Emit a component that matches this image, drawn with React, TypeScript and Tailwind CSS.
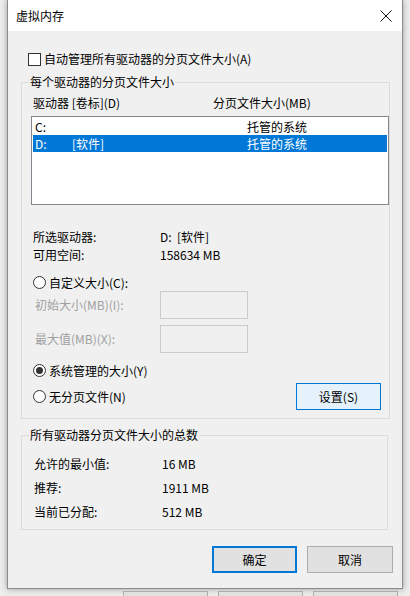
const font = "font-['Noto_Sans_CJK_SC',sans-serif]";

const drives = [
  { letter: "C:", label: "", size: "托管的系统", selected: false },
  { letter: "D:", label: "[软件]", size: "托管的系统", selected: true },
];

const totals = [
  { label: "允许的最小值:", value: "16 MB" },
  { label: "推荐:", value: "1911 MB" },
  { label: "当前已分配:", value: "512 MB" },
];

function Radio({ checked }: { checked?: boolean }) {
  return (
    <span className="w-[13px] h-[13px] rounded-full border border-[#333333] bg-white flex items-center justify-center shrink-0">
      {checked && <span className="w-[7px] h-[7px] rounded-full bg-[#333333]" />}
    </span>
  );
}

export default function App() {
  return (
    <div className={`w-[410px] h-[596px] bg-[#ededed] overflow-hidden text-[12px] leading-[16px] text-black ${font}`}>
      {/* ── Dialog ── */}
      <div className="ml-[7px] w-[396px] h-[589px] flex flex-col border border-t-0 border-[#8c8c8c] bg-[#f0f0f0] shadow-[0_0_6px_rgba(0,0,0,0.35)]">
        {/* Title bar */}
        <div className="h-[31px] bg-white flex items-center pl-[8px] pr-[10px]">
          <span className="text-[12px]">虚拟内存</span>
          <svg className="ml-auto" width="12" height="12" viewBox="0 0 12 12">
            <path d="M0.5 0.5 L11.5 11.5 M11.5 0.5 L0.5 11.5" stroke="#111" strokeWidth="1" />
          </svg>
        </div>

        <div className="pl-[13px] pr-[14px] flex flex-col">
          {/* Auto manage checkbox */}
          <div className="mt-[20px] h-[16px] pl-[7px] flex items-center gap-[3px]">
            <span className="w-[13px] h-[13px] border border-[#333333] bg-white shrink-0" />
            <span>自动管理所有驱动器的分页文件大小(A)</span>
          </div>

          {/* Per-drive group */}
          <fieldset className="mt-[7px] border border-[#dcdcdc] pb-[8px]">
            <legend className="ml-[7px] px-[1px] leading-[16px]">每个驱动器的分页文件大小</legend>

            <div className="mt-[5px] h-[16px] pl-[11px] flex">
              <span className="w-[180px]">驱动器 [卷标](D)</span>
              <span>分页文件大小(MB)</span>
            </div>

            <div className="mt-[5px] ml-[9px] w-[358px] h-[89px] border border-[#828790] bg-white p-[1px]">
              {drives.map((d) => (
                <div
                  key={d.letter}
                  className={`h-[17px] pl-[2px] flex items-center ${d.selected ? "bg-[#0078d7] text-white" : ""}`}
                >
                  <span className="w-[37px]">{d.letter}</span>
                  <span className="w-[175px]">{d.label}</span>
                  <span>{d.size}</span>
                </div>
              ))}
            </div>

            <div className="mt-[23px] pl-[11px]">
              <div className="h-[18px] flex items-center">
                <span className="w-[127px]">所选驱动器:</span>
                <span>D:&nbsp;&nbsp;[软件]</span>
              </div>
              <div className="h-[18px] flex items-center">
                <span className="w-[127px]">可用空间:</span>
                <span>158634 MB</span>
              </div>
            </div>

            <div className="mt-[10px] h-[17px] pl-[11px] flex items-center gap-[3px]">
              <Radio />
              <span>自定义大小(C):</span>
            </div>

            <div className="h-[28px] pl-[13px] flex items-center">
              <span className="w-[125px] text-[#a0a0a0]">初始大小(MB)(I):</span>
              <span className="w-[88px] h-[28px] border border-[#cccccc] bg-[#f0f0f0]" />
            </div>
            <div className="mt-[6px] h-[28px] pl-[13px] flex items-center">
              <span className="w-[125px] text-[#a0a0a0]">最大值(MB)(X):</span>
              <span className="w-[88px] h-[28px] border border-[#cccccc] bg-[#f0f0f0]" />
            </div>

            <div className="mt-[9px] h-[17px] pl-[11px] flex items-center gap-[3px]">
              <Radio checked />
              <span>系统管理的大小(Y)</span>
            </div>

            <div className="mt-[4px] h-[27px] pl-[11px] flex items-center gap-[3px]">
              <Radio />
              <span>无分页文件(N)</span>
              <button className="ml-auto mr-[8px] w-[85px] h-[27px] border border-[#0078d7] bg-[#e5f1fb]">
                设置(S)
              </button>
            </div>
          </fieldset>

          {/* Totals group */}
          <fieldset className="mt-[8px] border border-[#dcdcdc] pb-[5px]">
            <legend className="ml-[7px] px-[1px] leading-[16px]">所有驱动器分页文件大小的总数</legend>
            <div className="mt-[9px] pl-[12px]">
              {totals.map((t) => (
                <div key={t.label} className="h-[24px] flex items-center">
                  <span className="w-[128px]">{t.label}</span>
                  <span>{t.value}</span>
                </div>
              ))}
            </div>
          </fieldset>
        </div>

        {/* Dialog buttons */}
        <div className="mt-[16px] pr-[9px] flex justify-end gap-[10px]">
          <button className="w-[85px] h-[27px] border-2 border-[#0078d7] bg-[#e1e1e1]">确定</button>
          <button className="w-[86px] h-[27px] border border-[#adadad] bg-[#e1e1e1]">取消</button>
        </div>
      </div>

      {/* Window behind the dialog */}
      <div className="mt-[2px] flex pl-[123px] gap-[10px]">
        <span className="w-[85px] h-[10px] border border-[#adadad] bg-[#e1e1e1]" />
        <span className="w-[85px] h-[10px] border border-[#adadad] bg-[#e1e1e1]" />
        <span className="w-[85px] h-[10px] border border-[#adadad] bg-[#e1e1e1]" />
      </div>
    </div>
  );
}
